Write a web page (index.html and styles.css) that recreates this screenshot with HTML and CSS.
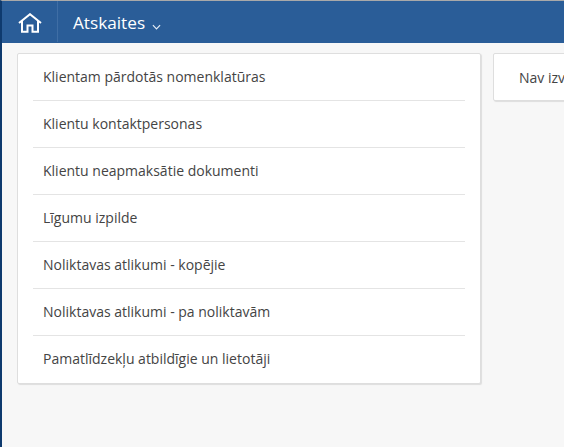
FILE: index.html
```html
<!DOCTYPE html>
<html lang="lv">
<head>
<meta charset="utf-8">
<title>Atskaites</title>
<link rel="stylesheet" href="styles.css">
</head>
<body>
<div class="app">
  <header class="topbar">
    <a class="home">
      <svg class="home-icon" viewBox="0 0 24 20" width="24" height="20" aria-hidden="true">
        <path d="M1 10 L12 1.2 L23 10 M4 8 V18.8 H9.5 V12.5 H14.5 V18.8 H20 V8" fill="none" stroke="#fff" stroke-width="2" stroke-linejoin="miter"/>
      </svg>
    </a>
    <div class="title">Atskaites
      <svg class="caret" viewBox="0 0 10 6" width="9" height="6" aria-hidden="true"><path d="M1 1 L5 5 L9 1" fill="none" stroke="#e6edf6" stroke-width="1.3"/></svg>
    </div>
  </header>
  <main class="content">
    <ul class="card list">
      <li>Klientam pārdotās nomenklatūras</li>
      <li>Klientu kontaktpersonas</li>
      <li>Klientu neapmaksātie dokumenti</li>
      <li>Līgumu izpilde</li>
      <li>Noliktavas atlikumi - kopējie</li>
      <li>Noliktavas atlikumi - pa noliktavām</li>
      <li>Pamatlīdzekļu atbildīgie un lietotāji</li>
    </ul>
    <div class="card side">Nav izvēlēta atskaite</div>
  </main>
</div>
</body>
</html>
```
FILE: styles.css
```css
html, body {
  margin: 0;
  padding: 0;
  height: 100%;
  overflow: hidden;
}
body {
  background: #f7f7f7;
  font-family: "Open Sans", sans-serif;
  color: #444;
}
.app {
  height: 447px;
  box-sizing: border-box;
  border-left: 2px solid #0e3a6e;
  border-top: 1px solid #a9a9a9;
  background: #f7f7f7;
  overflow: hidden;
}
.topbar {
  height: 42px;
  background: #2a5d98;
  display: flex;
  align-items: stretch;
  color: #fff;
}
.home {
  width: 56px;
  box-sizing: border-box;
  border-right: 1px solid #3f6ea5;
  margin-bottom: 1px;
  padding: 3px 0 0 1px;
  display: flex;
  align-items: center;
  justify-content: center;
}
.title {
  margin-left: 15px;
  font-size: 17.2px;
  line-height: 44px;
  white-space: nowrap;
}
.caret {
  margin-left: 2px;
  vertical-align: -1px;
}
.content {
  display: flex;
  gap: 12px;
  padding: 10px 0 0 15px;
  align-items: flex-start;
  width: 700px;
}
.card {
  background: #fff;
  border: 1px solid #dedede;
  border-radius: 2px;
  box-shadow: 1px 1px 1px rgba(0,0,0,.1);
  box-sizing: border-box;
}
.list {
  list-style: none;
  margin: 0;
  padding: 0 15px;
  width: 464px;
  flex: none;
}
.list li {
  height: 47px;
  box-sizing: border-box;
  padding-left: 10px;
  line-height: 46px;
  font-size: 14px;
  border-bottom: 1px solid #e4e4e4;
  white-space: nowrap;
}
.list li:last-child {
  border-bottom: 0;
}
.side {
  flex: none;
  width: 300px;
  height: 48px;
  padding-left: 25px;
  line-height: 47px;
  font-size: 14px;
  white-space: nowrap;
}
```
